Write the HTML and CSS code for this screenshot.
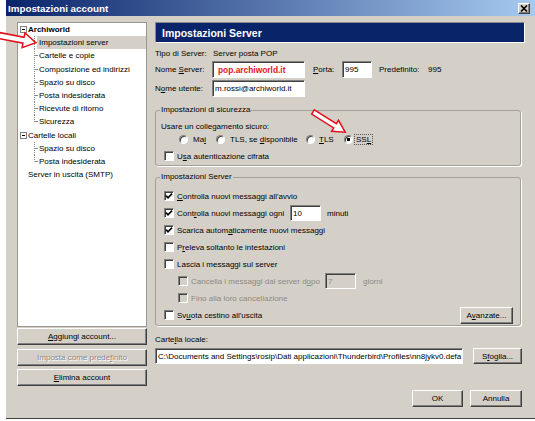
FILE: index.html
```html
<!DOCTYPE html>
<html lang="it">
<head>
<meta charset="utf-8">
<title>Impostazioni account</title>
<link rel="stylesheet" href="styles.css">
</head>
<body>
<div class="window">
  <div class="titlebar">
    <span class="title">Impostazioni account</span>
    <span class="close"><svg width="8" height="7" viewBox="0 0 8 7"><path d="M1 0.5 L7 6.5 M7 0.5 L1 6.5" stroke="#000" stroke-width="1.6" fill="none"/></svg></span>
  </div>
  <div class="client">
    <div class="left">
      <div class="tree">
        <div class="node root"><span class="exp"></span><b>Archiworld</b></div>
        <div class="node child"><span class="lbl sel">Impostazioni server</span></div>
        <div class="node child"><span class="lbl">Cartelle e copie</span></div>
        <div class="node child"><span class="lbl">Composizione ed indirizzi</span></div>
        <div class="node child"><span class="lbl">Spazio su disco</span></div>
        <div class="node child"><span class="lbl">Posta indesiderata</span></div>
        <div class="node child"><span class="lbl">Ricevute di ritorno</span></div>
        <div class="node child last"><span class="lbl">Sicurezza</span></div>
        <div class="node root"><span class="exp"></span><span>Cartelle locali</span></div>
        <div class="node child"><span class="lbl">Spazio su disco</span></div>
        <div class="node child last"><span class="lbl">Posta indesiderata</span></div>
        <div class="node plain">Server in uscita (SMTP)</div>
      </div>
      <button class="btn wide"><u>A</u>ggiungi account...</button>
      <button class="btn wide disabled">Imposta come prede<u>f</u>inito</button>
      <button class="btn wide"><u>E</u>limina account</button>
    </div>

    <div class="right">
      <div class="header">Impostazioni Server</div>

      <div class="info"><span class="lab">Tipo di Server:</span><span class="val">Server posta POP</span></div>
      <div class="frow">
        <span class="lab">Nome <u>S</u>erver:</span>
        <div class="field w-srv"><span class="srvname">pop.archiworld.it</span></div>
        <span class="porta"><u>P</u>orta:</span>
        <div class="field w-port">995</div>
        <span class="predef">Predefinito:</span><span>995</span>
      </div>
      <div class="frow">
        <span class="lab">N<u>o</u>me utente:</span>
        <div class="field w-srv">m.rossi@archiworld.it</div>
      </div>

      <fieldset class="group sec">
        <legend>Impostazioni di sicurezza</legend>
        <div class="line">Usare un collegamento sicuro:</div>
        <div class="radios">
          <span class="ritem"><span class="rb"></span><span>Ma<u>i</u></span></span>
          <span class="ritem"><span class="rb"></span><span>TLS, se <u>d</u>isponibile</span></span>
          <span class="ritem tight"><span class="rb"></span><span><u>T</u>LS</span></span>
          <span class="ritem tighter"><span class="rb on"></span><span class="focus">SS<u>L</u></span></span>
        </div>
        <div class="cbrow"><span class="cb"></span><span>U<u>s</u>a autenticazione cifrata</span></div>
      </fieldset>

      <fieldset class="group srv">
        <legend>Impostazioni Server</legend>
        <div class="srow"><span class="cb"><svg width="8" height="8" viewBox="0 0 8 8"><polyline points="1,3.6 3,5.8 7,1.6" stroke="#000" stroke-width="1.6" fill="none"/></svg></span><span class="txt"><u>C</u>ontrolla nuovi messaggi all'avvio</span></div>
        <div class="srow"><span class="cb"><svg width="8" height="8" viewBox="0 0 8 8"><polyline points="1,3.6 3,5.8 7,1.6" stroke="#000" stroke-width="1.6" fill="none"/></svg></span><span class="txt w-lab1">Cont<u>r</u>olla nuovi messaggi ogni</span><div class="field w-small">10</div><span class="unit">minuti</span></div>
        <div class="srow"><span class="cb"><svg width="8" height="8" viewBox="0 0 8 8"><polyline points="1,3.6 3,5.8 7,1.6" stroke="#000" stroke-width="1.6" fill="none"/></svg></span><span class="txt">Scarica autom<u>a</u>ticamente nuovi messaggi</span></div>
        <div class="srow"><span class="cb"></span><span class="txt">P<u>r</u>eleva soltanto le intestazioni</span></div>
        <div class="srow"><span class="cb"></span><span class="txt">Lascia i messaggi sul server</span></div>
        <div class="srow ind dis"><span class="cb off"></span><span class="txt w-lab2">Cancella i messaggi dal server d<u>o</u>po</span><div class="field w-small off">7</div><span class="unit2">giorni</span></div>
        <div class="srow ind dis"><span class="cb off"></span><span class="txt">Fino alla loro cancellazione</span></div>
        <div class="srow last"><span class="cb"></span><span class="txt">Sv<u>u</u>ota cestino all'uscita</span><button class="btn adv">A<u>v</u>anzate...</button></div>
      </fieldset>

      <div class="loclabel">Carte<u>l</u>la locale:</div>
      <div class="locrow">
        <div class="field w-path">C:\Documents and Settings\rosip\Dati applicazioni\Thunderbird\Profiles\nn8jykv0.defa</div>
        <button class="btn browse">S<u>f</u>oglia...</button>
      </div>

      <div class="actions">
        <button class="btn ok">OK</button>
        <button class="btn cancel">Annulla</button>
      </div>
    </div>
  </div>
</div>

<svg class="annot" width="535" height="421" viewBox="0 0 535 421">
  <g transform="translate(-1,35.5) rotate(11)">
    <polygon points="0,-3 25,-3 25,-7.5 37.5,0 25,7.5 25,3 0,3" fill="#fff" stroke="#e3101c" stroke-width="1.5" stroke-linejoin="miter"/>
  </g>
  <g transform="translate(313,112) rotate(32)">
    <polygon points="0,-2.5 26,-2.5 26,-6.5 38,0 26,6.5 26,2.5 0,2.5" fill="#fff" stroke="#e3101c" stroke-width="1.5"/>
  </g>
</svg>
</body>
</html>
```
FILE: styles.css
```css
* { box-sizing: border-box; }
html, body { margin: 0; padding: 0; }
body {
  position: relative;
  width: 535px;
  height: 421px;
  overflow: hidden;
  background: #fff;
  font-family: "Liberation Sans", Arial, sans-serif;
  font-size: 8px;
  color: #000;
}
u { text-decoration: underline; text-underline-offset: 1px; }

.window {
  margin-left: 6px;
  width: 529px;
  height: 419px;
  background: #d4d0c8;
  border-bottom: 1px solid #404040;
}

.titlebar {
  height: 16px;
  display: flex;
  align-items: center;
  justify-content: space-between;
  padding: 0 5px 0 2px;
  background: linear-gradient(to right, #0a246a, #a6caf0);
}
.title { color: #fff; font-weight: bold; font-size: 9.8px; }
.close {
  width: 12px;
  height: 11px;
  background: #d4d0c8;
  border: 1px solid;
  border-color: #fff #404040 #404040 #fff;
  box-shadow: inset -1px -1px #808080;
  display: flex;
  align-items: center;
  justify-content: center;
}

.client { display: flex; gap: 8px; padding: 6px 0 0 11px; }

/* left column */
.left { width: 130px; flex: none; display: flex; flex-direction: column; }
.tree {
  height: 305px;
  margin-bottom: 1px;
  background: #fff;
  border: 1px solid #999790;
  overflow: hidden;
}
.node { height: 13.2px; display: flex; align-items: center; white-space: nowrap; }
.root { padding-left: 2px; }
.exp {
  width: 7px; height: 7px; margin-right: 1px; flex: none;
  border: 1px solid #808080;
  background: linear-gradient(#000, #000) center / 3px 1px no-repeat, #fff;
}
.child {
  padding-left: 19px;
  background-image:
    linear-gradient(#8a8a8a, #8a8a8a),
    repeating-linear-gradient(to bottom, #8a8a8a 0 1px, transparent 1px 2px);
  background-size: 3px 1px, 1px 100%;
  background-position: 17px 50%, 16px 0;
  background-repeat: no-repeat;
}
.child.last { background-size: 3px 1px, 1px 50%; }
.lbl { flex: 1; height: 100%; line-height: 13.2px; padding-left: 2px; }
.sel { background: #d4d0c8; }
.plain { padding-left: 10px; }

.btn {
  height: 17px;
  padding: 0;
  background: #d4d0c8;
  border: 1px solid;
  border-color: #fff #404040 #404040 #fff;
  box-shadow: inset -1px -1px #808080;
  font-family: inherit;
  font-size: 8px;
  color: #000;
  text-align: center;
}
.wide { width: 130px; }
.wide + .wide { margin-top: 3.5px; }
.disabled { color: #8c8984; text-shadow: 1px 1px 0 #fff; }

/* right column */
.right { width: 370px; flex: none; display: flex; flex-direction: column; }
.header {
  height: 21px;
  background: #0a246a;
  border: 1px solid;
  border-color: #8a8a8a #fff #fff #8a8a8a;
  color: #fff;
  font-weight: bold;
  font-size: 10.5px;
  padding-left: 6px;
  display: flex;
  align-items: center;
}
.info { margin-top: 4px; height: 12px; display: flex; align-items: center; }
.lab { width: 57px; flex: none; }
.val { padding-left: 1px; }
.frow { margin-top: 2px; height: 17px; display: flex; align-items: center; }

.field {
  height: 17px;
  background: #fff;
  border: 1px solid;
  border-color: #808080 #fff #fff #808080;
  box-shadow: inset 1px 1px #404040;
  padding-left: 2px;
  display: flex;
  align-items: center;
  white-space: nowrap;
  overflow: hidden;
  flex: none;
}
.w-srv { width: 93px; }
.srvname { color: #e8141c; font-weight: bold; font-size: 8.4px; padding-left: 3px; }
.porta { margin-left: 8px; width: 29px; }
.w-port { width: 30px; }
.predef { margin-left: 7px; width: 49px; }

/* group boxes */
.group {
  width: 366px;
  min-width: 0;
  margin: 8px 0 0 0;
  border: 1px solid #a3a097;
  border-radius: 3px;
  box-shadow: 1px 1px 0 #fff;
  padding: 6px 7px 3px 5px;
}
.group legend {
  padding: 0 1px;
  margin-left: -1px;
  line-height: 10px;
  font-size: 8px;
}
.line { height: 12px; line-height: 12px; }
.radios {
  display: grid;
  grid-template-columns: 37px 90px 38px auto;
  height: 12px;
  padding-left: 18px;
  align-items: center;
}
.ritem { display: flex; align-items: center; gap: 5px; }
.ritem.tight { gap: 4px; }
.ritem.tighter { gap: 2px; }
.rb {
  width: 9px; height: 9px; flex: none;
  border-radius: 50%;
  background: #fff;
  border: 1px solid;
  border-color: #808080 #fff #fff #808080;
  box-shadow: inset 1px 1px #404040;
}
.rb.on { background: radial-gradient(circle, #000 0 1.5px, #fff 2px); }
.focus { outline: 1px dotted #555; padding: 0 1px; line-height: 9px; }

.cbrow { margin-top: 5px; height: 12px; display: flex; align-items: center; gap: 3px; padding-left: 3px; }
.cb {
  width: 10px; height: 10px; flex: none;
  background: #fff;
  border: 1px solid;
  border-color: #808080 #fff #fff #808080;
  box-shadow: inset 1px 1px #404040;
  display: flex;
  align-items: center;
  justify-content: center;
}
.cb.off { background: #d4d0c8; }

.srv { margin-top: 6px; padding: 5.5px 7px 1.5px 5px; }
.srow { height: 17px; display: flex; align-items: center; padding-left: 3px; }
.srow .txt { margin-left: 3px; }
.srow.ind { padding-left: 17px; }
.w-lab1 { width: 113px; flex: none; }
.w-lab2 { width: 134px; flex: none; }
.w-small { width: 31px; height: 16px; }
.field.off { background: #d4d0c8; color: #8c8984; }
.unit { margin-left: 6px; }
.unit2 { margin-left: 7px; }
.dis { color: #8c8984; }
.srow.last { justify-content: flex-start; }
.adv { width: 53px; margin-left: auto; }

.loclabel { margin-top: 8px; height: 12px; line-height: 12px; }
.locrow { margin-top: 2px; height: 16px; display: flex; align-items: center; gap: 10px; }
.w-path { width: 308px; height: 16px; }
.browse { width: 49px; height: 16px; }

.actions { margin-top: 26px; display: flex; justify-content: flex-end; gap: 7px; padding-right: 3px; }
.ok { width: 51px; }
.cancel { width: 52px; }

.annot { position: absolute; left: 0; top: 0; pointer-events: none; }
```
